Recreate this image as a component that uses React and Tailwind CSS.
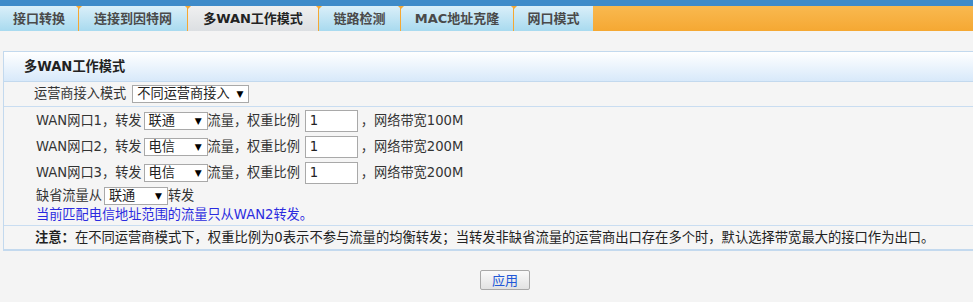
const FONT = "font-['DejaVu_Sans','Noto_Sans_CJK_SC',sans-serif]";

const TABS = [
  { label: "接口转换", w: "w-[78px]" },
  { label: "连接到因特网", w: "w-[108px]" },
  { label: "多WAN工作模式", w: "w-[130px]", active: true },
  { label: "链路检测", w: "w-[81px]" },
  { label: "MAC地址克隆", w: "w-[112px]" },
  { label: "网口模式", w: "w-[79px]" },
];

const WANS = [
  { port: 1, isp: "联通", bw: "100M" },
  { port: 2, isp: "电信", bw: "200M" },
  { port: 3, isp: "电信", bw: "200M" },
];

function Sep() {
  return (
    <div className="relative w-px self-stretch bg-[#f5a832]">
      <span className="absolute top-0 left-1/2 -translate-x-1/2 w-0 h-0 border-l-[3px] border-r-[3px] border-t-[3px] border-l-transparent border-r-transparent border-t-[#f5a832]" />
    </div>
  );
}

function Select({ value, w }) {
  return (
    <span className={`inline-flex items-center justify-between h-[18px] ${w} border border-[#a9a9a9] bg-white pl-[4px] pr-[5px] text-[13.2px] leading-none text-[#222]`}>
      <span>{value}</span>
      <span className="text-[9px] text-black">▼</span>
    </span>
  );
}

export default function App() {
  return (
    <div className={`w-[973px] h-[302px] overflow-hidden bg-[#f4f4f4] text-[13.2px] text-[#333] ${FONT}`}>
      {/* top strip */}
      <div className="h-[6px] bg-[#3f8bc9]" />

      {/* tabs */}
      <div className="flex h-[25px] bg-gradient-to-b from-[#f9b94f] to-[#f5a832]">
        {TABS.map((t, i) => (
          <div key={t.label} className="flex">
            {i > 0 && <Sep />}
            <div
              className={`${t.w} flex items-center justify-center font-bold text-[13px] ${
                t.active
                  ? "bg-gradient-to-b from-[#f0f0f0] to-[#dcdfe2] text-[#222]"
                  : "bg-gradient-to-b from-[#daeff9] to-[#a8daef] text-[#4a4a4a]"
              }`}
            >
              {t.label}
            </div>
          </div>
        ))}
      </div>

      {/* panel */}
      <div className="mt-[20px] ml-[3px] border-l border-t border-b-2 border-[#c3d9ee]">
        <div className="h-[30px] flex items-center pl-[20px] border-b border-[#c3d9ee] bg-gradient-to-b from-white to-[#d8e9fa] font-bold text-[#222]">
          多WAN工作模式
        </div>

        <div className="h-[25px] flex items-center pl-[30px] border-b border-[#c9ddf1] bg-[#f5f5f5]">
          <span className="leading-[18px] mr-[6px]">运营商接入模式</span>
          <Select value="不同运营商接入" w="w-[117px]" />
        </div>

        <div className="pt-px pb-[1px] pl-[32px] border-b border-[#c9ddf1] bg-[#f5f5f5]">
          {WANS.map((w) => (
            <div key={w.port} className="h-[26px] flex items-center leading-[18px]">
              <span className="mr-[2px]">WAN网口{w.port}，转发</span>
              <Select value={w.isp} w="w-[64px]" />
              <span>流量，权重比例</span>
              <span className="ml-[5px] w-[53px] h-[22px] flex items-center border border-[#a9a9a9] bg-white pl-[4px] text-[#222]">1</span>
              <span className="ml-[3px]">，网络带宽{w.bw}</span>
            </div>
          ))}
          <div className="h-[20px] flex items-center leading-[18px]">
            <span className="mr-[2px]">缺省流量从</span>
            <Select value="联通" w="w-[64px]" />
            <span>转发</span>
          </div>
          <div className="h-[18px] leading-[18px] text-[#2b2bdf]">当前匹配电信地址范围的流量只从WAN2转发。</div>
        </div>

        <div className="h-[23px] flex items-center pl-[31px] bg-[#f5f5f5] text-[#222] text-[13.3px]">
          <span className="font-bold">注意：</span>
          <span>在不同运营商模式下，权重比例为0表示不参与流量的均衡转发；当转发非缺省流量的运营商出口存在多个时，默认选择带宽最大的接口作为出口。</span>
        </div>
      </div>

      <div className="mt-[19px] ml-[480px]">
        <button className="w-[50px] h-[20px] flex items-center justify-center rounded-[2px] border border-[#a8a8a8] bg-gradient-to-b from-[#fafafa] to-[#e2e2e2] text-[13px] text-[#2158d8] leading-none">
          应用
        </button>
      </div>
    </div>
  );
}
